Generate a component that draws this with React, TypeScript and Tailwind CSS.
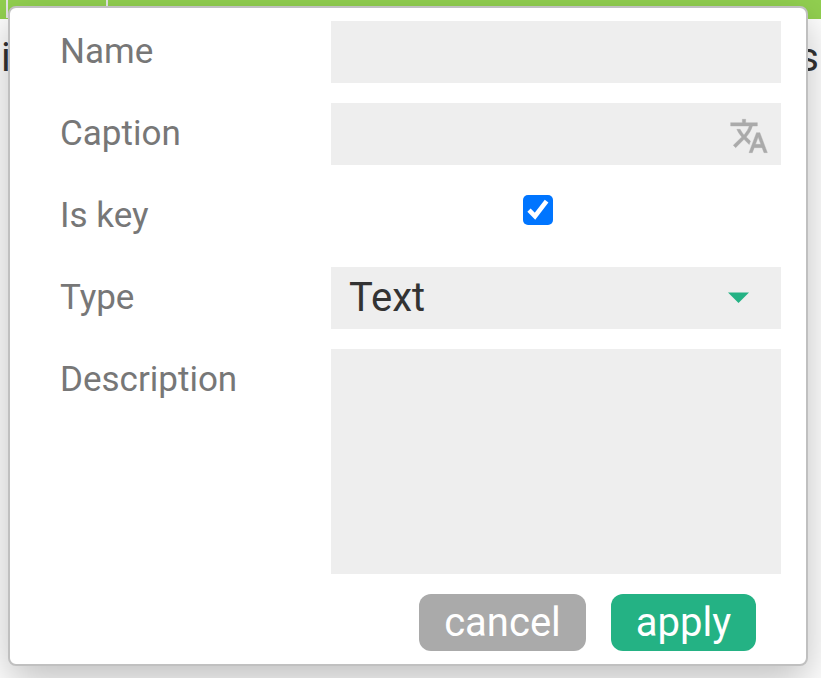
'use client';

import { useState } from 'react';

function TranslateIcon() {
  return (
    <svg
      viewBox="0 0 24 24"
      className="size-10 shrink-0"
      fill="#aaaaaa"
      stroke="#aaaaaa"
      strokeWidth="0.25"
    >
      <path d="M12.87 15.07l-2.54-2.51.03-.03c1.74-1.94 2.98-4.17 3.71-6.53H17V4h-7V2H8v2H1v1.99h11.17C11.5 7.92 10.44 9.75 9 11.35 8.07 10.32 7.3 9.19 6.69 8h-2c.73 1.63 1.73 3.17 2.98 4.56l-5.09 5.02L4 19l5-5 3.11 3.11.76-2.04zM18.5 10h-2L12 22h2l1.12-3h4.75L21 22h2l-4.5-12zm-2.62 7l1.62-4.33L19.12 17h-3.24z" />
    </svg>
  );
}

function Row({
  label,
  children,
}: {
  label: string;
  children: React.ReactNode;
}) {
  return (
    <div className="flex items-start">
      <label className="w-[271px] shrink-0 text-[35px] leading-[62px] text-[#777777]">
        {label}
      </label>
      {children}
    </div>
  );
}

export default function App() {
  const [name, setName] = useState('');
  const [caption, setCaption] = useState('');
  const [isKey, setIsKey] = useState(true);
  const [description, setDescription] = useState('');

  return (
    <div className="relative h-[678px] w-[821px] overflow-hidden bg-white font-['Roboto',sans-serif]">
      {/* Page behind the dialog */}
      <div className="flex h-[19px] bg-[#92d050]">
        <div className="h-[18px] w-2 border-r-2 border-[#e6e6e6]" />
        <div className="h-[18px] w-[100px] border-r-2 border-[#e6e6e6]" />
      </div>
      <div className="flex h-[78px] items-center justify-between pr-[2px] pl-px text-[40px] text-[#333333]">
        <span>i</span>
        <span>s</span>
      </div>

      {/* Dialog */}
      <div className="absolute top-[6px] left-2 flex h-[660px] w-[800px] flex-col rounded-lg border-2 border-[#c0c0c0] bg-white pt-[13px] pr-[25px] pl-[50px] shadow-[0_15px_40px_rgba(0,0,0,0.25)]">
        <div className="flex flex-col gap-5">
          <Row label="Name">
            <input
              className="h-[62px] w-[450px] bg-[#eeeeee] px-[18px] text-[40px] text-[#333333] outline-none"
              value={name}
              onChange={(e) => setName(e.target.value)}
            />
          </Row>
          <Row label="Caption">
            <div className="flex h-[62px] w-[450px] items-center bg-[#eeeeee] pt-1 pr-[12.5px]">
              <input
                className="h-full min-w-0 flex-1 px-[18px] text-[40px] text-[#333333] outline-none"
                value={caption}
                onChange={(e) => setCaption(e.target.value)}
              />
              <TranslateIcon />
            </div>
          </Row>
          <Row label="Is key">
            <div className="flex h-[62px] w-[414px] justify-center pt-[10px]">
              <button
                type="button"
                role="checkbox"
                aria-checked={isKey}
                onClick={() => setIsKey(!isKey)}
                className="size-[30px] rounded-[5px] bg-[#0075ff]"
              >
                {isKey && (
                  <svg viewBox="0 0 30 30" className="size-[30px]">
                    <path
                      d="M6 15.2 L12 21.2 L23.6 6.2"
                      fill="none"
                      stroke="white"
                      strokeWidth="4.6"
                    />
                  </svg>
                )}
              </button>
            </div>
          </Row>
          <Row label="Type">
            <div className="flex h-[62px] w-[450px] items-center justify-between bg-[#eeeeee] pr-8 pl-[18px] text-[40px] text-[#333333]">
              <span>Text</span>
              <svg viewBox="0 0 21 11" className="mb-[2px] h-[11px] w-[21px]">
                <path d="M0 0.5 H21 L10.5 11 Z" fill="#24b284" />
              </svg>
            </div>
          </Row>
          <Row label="Description">
            <textarea
              className="h-[225px] w-[450px] resize-none bg-[#eeeeee] px-[18px] text-[40px] text-[#333333] outline-none"
              value={description}
              onChange={(e) => setDescription(e.target.value)}
            />
          </Row>
        </div>

        {/* Buttons */}
        <div className="mt-5 flex justify-end gap-[25px] pr-[25px] text-[40px] leading-[57px] text-white">
          <button className="h-[57px] w-[167px] rounded-xl bg-[#aaaaaa]">
            cancel
          </button>
          <button className="h-[57px] w-[145px] rounded-xl bg-[#24b284]">
            apply
          </button>
        </div>
      </div>
    </div>
  );
}
